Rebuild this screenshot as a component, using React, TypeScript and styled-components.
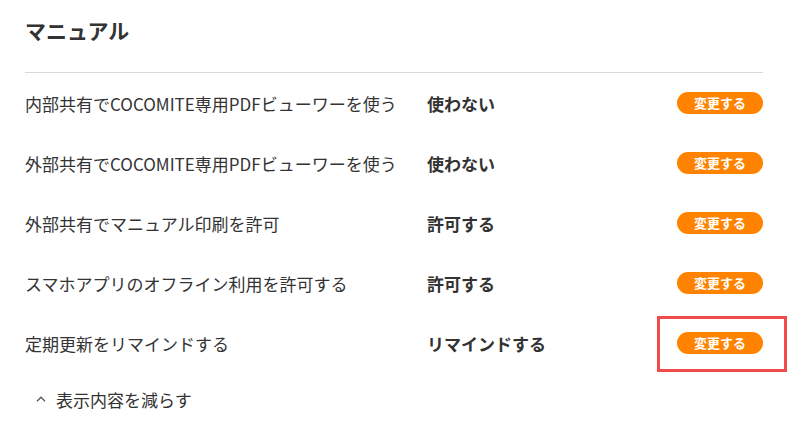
import React from "react";
import styled, { createGlobalStyle } from "styled-components";

const Global = createGlobalStyle`
  html, body { margin: 0; padding: 0; background: #fff; }
  body { font-family: "Noto Sans CJK JP", "Noto Sans", sans-serif; color: #333; }
`;

const Page = styled.div`
  width: 800px;
  height: 442px;
  box-sizing: border-box;
  padding: 0 37px 0 25px;
  overflow: hidden;
`;

const Title = styled.h2`
  margin: 0;
  height: 58px;
  display: flex;
  align-items: center;
  font-size: 21px;
  font-weight: 700;
  color: #333;
  padding-top: 1px;
`;

const Divider = styled.hr`
  margin: 13px 0 0;
  border: 0;
  border-top: 1px solid #d9d9d9;
`;

const Row = styled.div`
  display: grid;
  grid-template-columns: 402px 1fr auto;
  align-items: center;
  height: 60px;
  font-size: 17px;
`;

const Label = styled.div`
  color: #333;
  white-space: nowrap;
`;

const Value = styled.div`
  font-weight: 700;
  color: #333;
`;

const ButtonWrap = styled.div`
  position: relative;
  display: flex;
`;

const ChangeButton = styled.button`
  width: 86px;
  height: 22px;
  border: 0;
  border-radius: 11px;
  background: #ff8300;
  color: #fff;
  font-family: inherit;
  font-size: 13px;
  font-weight: 700;
  padding: 0;
  line-height: 22px;
  cursor: pointer;
`;

const Highlight = styled.div`
  position: absolute;
  left: -20px;
  right: -24px;
  top: -16px;
  bottom: -18px;
  border: 3px solid #f24a4a;
  pointer-events: none;
`;

const Toggle = styled.div`
  display: flex;
  align-items: center;
  gap: 10px;
  padding-left: 11px;
  height: 52px;
  font-size: 17px;
  color: #333;
`;

const rows = [
  { label: "内部共有でCOCOMITE専用PDFビューワーを使う", value: "使わない" },
  { label: "外部共有でCOCOMITE専用PDFビューワーを使う", value: "使わない" },
  { label: "外部共有でマニュアル印刷を許可", value: "許可する" },
  { label: "スマホアプリのオフライン利用を許可する", value: "許可する" },
  { label: "定期更新をリマインドする", value: "リマインドする", highlight: true },
];

export default function App() {
  return (
    <Page>
      <Global />
      <Title>マニュアル</Title>
      <Divider />
      {rows.map((r) => (
        <Row key={r.label}>
          <Label>{r.label}</Label>
          <Value>{r.value}</Value>
          <ButtonWrap>
            <ChangeButton>変更する</ChangeButton>
            {r.highlight && <Highlight />}
          </ButtonWrap>
        </Row>
      ))}
      <Toggle>
        <svg width="10" height="6" viewBox="0 0 10 6" fill="none">
          <path d="M1 5.2 L5 1.2 L9 5.2" stroke="#555" strokeWidth="1.3" />
        </svg>
        表示内容を減らす
      </Toggle>
    </Page>
  );
}
